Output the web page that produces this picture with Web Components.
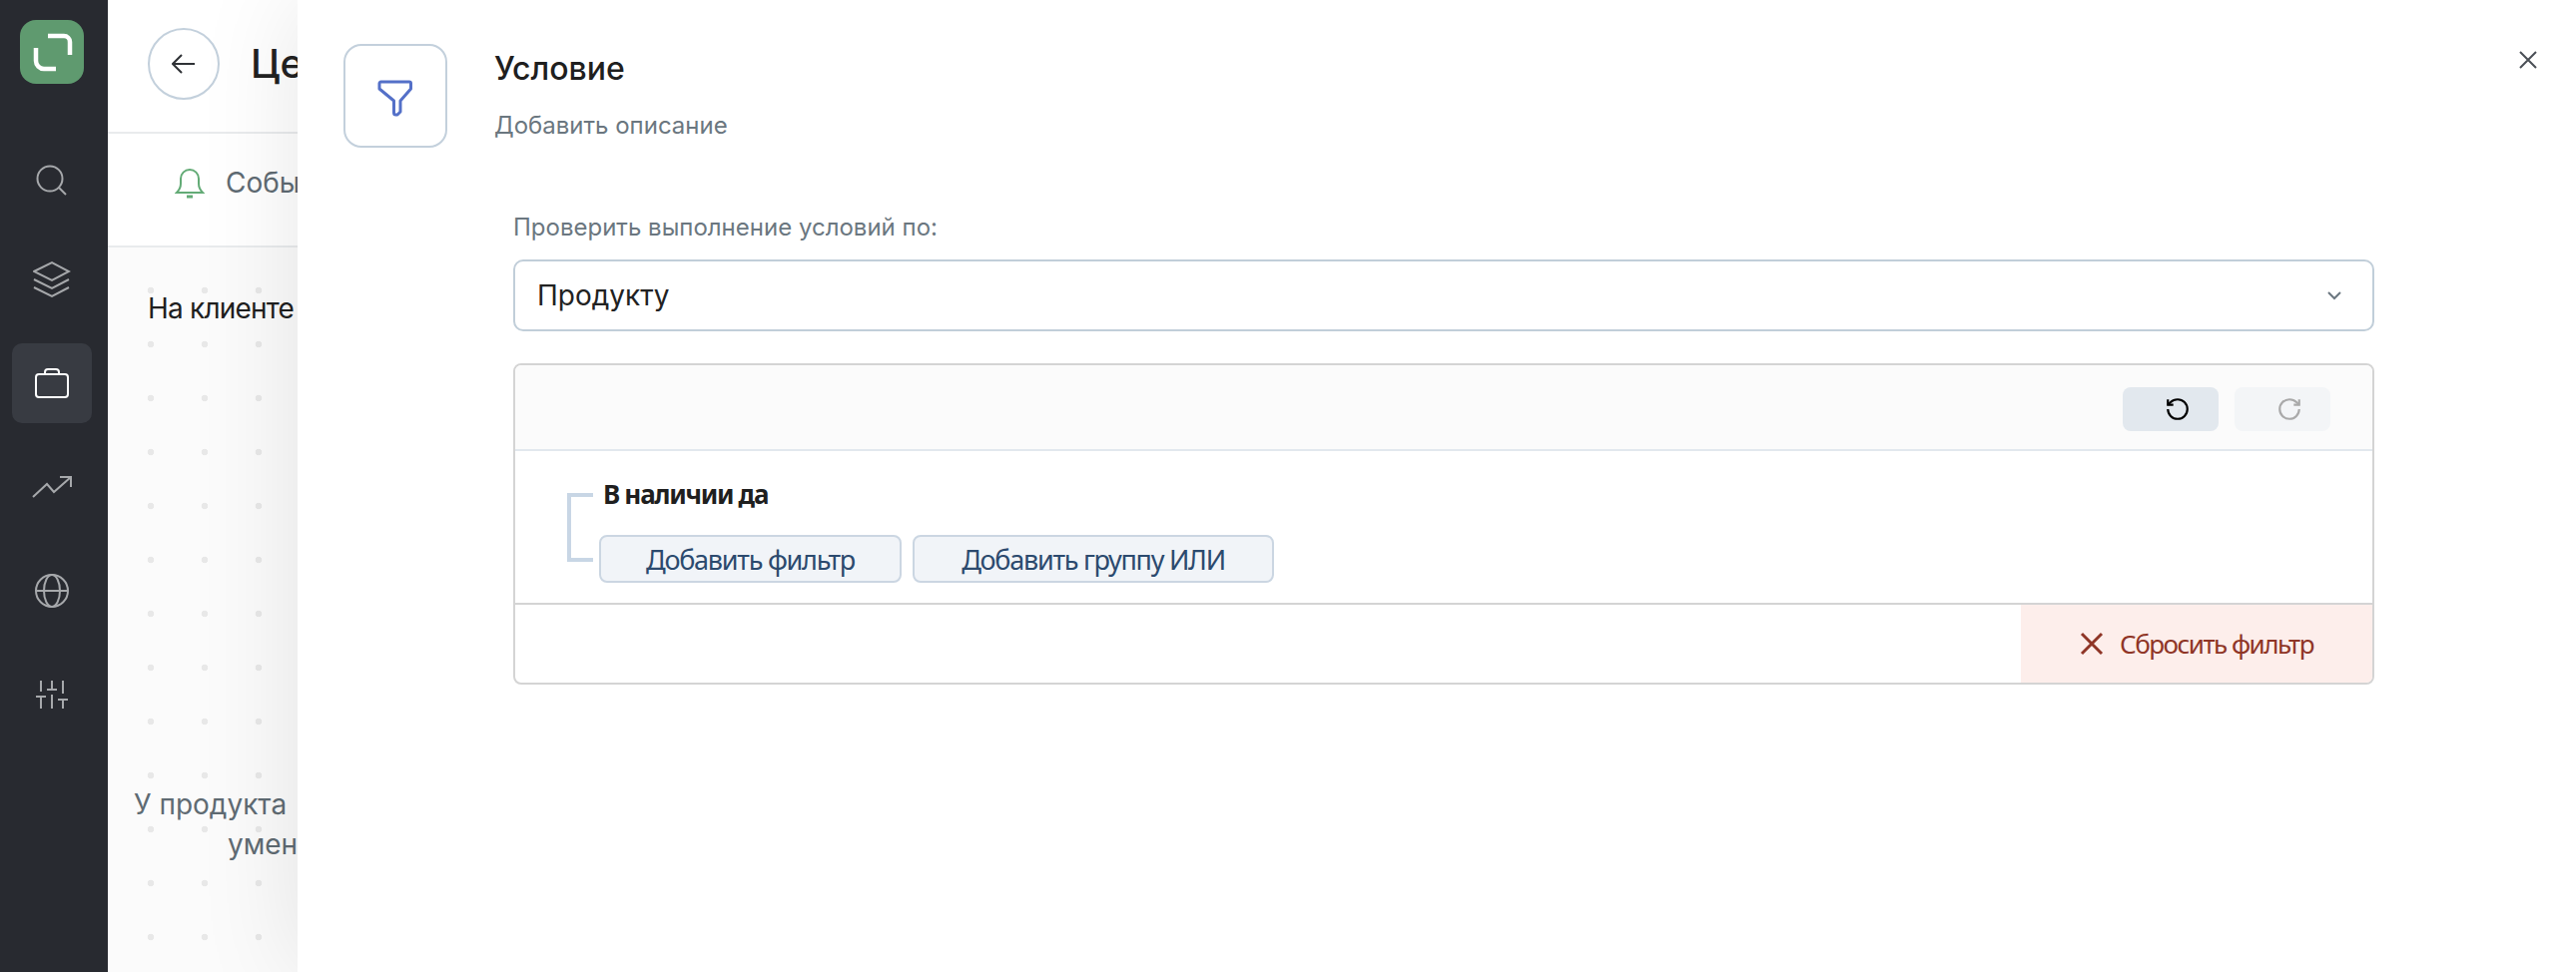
<!DOCTYPE html>
<html lang="ru">
<head>
<meta charset="utf-8">
<title>Условие</title>
<style>
html,body{margin:0;padding:0;height:100%;background:#fff;}
body{font-family:Inter,"Liberation Sans",sans-serif;}
</style>
</head>
<body>
<app-shell>
	<side-rail slot="rail"></side-rail>
	<page-view slot="page"></page-view>
	<condition-drawer slot="drawer"></condition-drawer>
</app-shell>

<script>
class AppShell extends HTMLElement {
	constructor() {
		super();
		this.attachShadow({ mode: 'open' });
		this.shadowRoot.innerHTML = `
		<style>
		:host{display:flex;width:2580px;height:974px;position:relative;overflow:hidden;}
		.page{flex:1;min-width:0;display:flex;}
		</style>
		<slot name="rail"></slot>
		<div class="page"><slot name="page"></slot></div>
		<slot name="drawer"></slot>
		`;
	}
}

class RailItem extends HTMLElement {
	constructor() {
		super();
		this.attachShadow({ mode: 'open' });
		this.shadowRoot.innerHTML = `
		<style>
		:host{display:flex;align-items:center;justify-content:center;width:80px;height:80px;border-radius:10px;color:#a6a8ab;}
		:host([active]){background:#383b42;color:#fff;}
		</style>
		<slot></slot>
		`;
	}
}

class SideRail extends HTMLElement {
	constructor() {
		super();
		this.attachShadow({ mode: 'open' });
		this.shadowRoot.innerHTML = `
		<style>
		:host{display:flex;flex-direction:column;align-items:center;flex:none;width:108px;height:100%;background:#282a30;box-sizing:border-box;padding:20px 4px 0 0;}
		.logo{width:64px;height:64px;margin:0 0 52px;border-radius:16px;background:#5f9a6f;}
		nav{display:flex;flex-direction:column;gap:24px;}
		svg{display:block;fill:none;stroke:currentColor;stroke-width:2;}
		.search{margin:11px 0 0 2px;}
		</style>
		<svg class="logo" viewBox="20 20 64 64" style="stroke:#fff;stroke-width:4.5">
			<path d="M48 36H64a6 6 0 0 1 6 6V55"/>
			<path d="M36 48V61a8 8 0 0 0 8 8H56"/>
		</svg>
		<nav>
			<rail-item><svg class="search" width="36" height="36" viewBox="0 0 36 36"><circle cx="15" cy="15" r="12.5"/><path d="M24 24l7 7"/></svg></rail-item>
			<rail-item><svg width="38" height="38" viewBox="0 0 38 38"><path d="M1 11 19 2l17 9-17 9z"/><path d="M1 19l18 9 17-9"/><path d="M1 27l18 9 17-9"/></svg></rail-item>
			<rail-item active><svg width="34" height="30" viewBox="0 0 34 30"><rect x="1" y="6" width="32" height="23" rx="3"/><path d="M10 6V4a3 3 0 0 1 3-3h8a3 3 0 0 1 3 3v2"/></svg></rail-item>
			<rail-item><svg width="40" height="24" viewBox="0 0 40 24"><path d="M1 22 15 9l7 8L39 2"/><path d="M28 2H39V12"/></svg></rail-item>
			<rail-item><svg width="36" height="36" viewBox="0 0 36 36"><circle cx="18" cy="18" r="16"/><ellipse cx="18" cy="18" rx="8" ry="16"/><path d="M2 18h32"/></svg></rail-item>
			<rail-item><svg width="34" height="30" viewBox="0 0 34 30"><path d="M6 1V12M6 18V29M1 17H11"/><path d="M17 1V10M17 15V29M12 10H22"/><path d="M28 1V14M28 21V29M23 20H33"/></svg></rail-item>
		</nav>
		`;
	}
}

class PageView extends HTMLElement {
	constructor() {
		super();
		this.attachShadow({ mode: 'open' });
		this.shadowRoot.innerHTML = `
		<style>
		:host{display:flex;flex-direction:column;flex:1;min-width:0;height:100%;white-space:nowrap;}
		header{display:flex;align-items:center;gap:31px;height:134px;box-sizing:border-box;flex:none;padding:0 0 4px 40px;border-bottom:2px solid #e9ebed;}
		.back{width:72px;height:72px;box-sizing:border-box;border:2px solid #c3d0dc;border-radius:50%;display:flex;align-items:center;justify-content:center;}
		h1{margin:0;font-size:40px;font-weight:500;color:#222;line-height:48px;}
		.tabs{display:flex;align-items:center;gap:21px;height:114px;box-sizing:border-box;flex:none;padding:0 0 14px 67px;border-bottom:2px solid #e9ebed;font-size:28px;color:#5f6b73;}
		.content{flex:1;background-color:#fbfbfb;background-image:radial-gradient(circle at 43px 43px,#e8e8e8 3px,transparent 3.6px);background-size:54px 54px;padding:44px 0 0 40px;}
		.status{font-size:28px;line-height:34px;color:#1f1f1f;letter-spacing:-.8px;}
		.empty{margin-top:460px;margin-left:-14px;font-size:28px;line-height:40px;color:#5f6b73;}
		.empty div + div{margin-left:94px;}
		svg{display:block;fill:none;}
		</style>
		<header>
			<div class="back"><svg width="24" height="20" viewBox="0 0 24 20" stroke="#2f3236" stroke-width="2"><path d="M23 10H2M10 1l-9 9 9 9"/></svg></div>
			<h1>Це</h1>
		</header>
		<div class="tabs">
			<svg width="30" height="32" viewBox="0 0 30 32" stroke="#63ab76" stroke-width="2"><path d="M2 26c3-3 4-5 4-9v-5a9 9 0 0 1 18 0v5c0 4 1 6 4 9z"/><path d="M12 30h6" stroke-width="3"/></svg>
			<span>Собы</span>
		</div>
		<div class="content">
			<div class="status">На клиенте</div>
			<div class="empty"><div>У продукта</div><div>умен</div></div>
		</div>
		`;
	}
}

class ConditionDrawer extends HTMLElement {
	constructor() {
		super();
		this.attachShadow({ mode: 'open' });
		this.shadowRoot.innerHTML = `
		<style>
		:host{display:block;position:absolute;left:298px;top:0;right:0;bottom:0;background:#fff;box-shadow:0 0 96px rgba(0,0,0,.1);box-sizing:border-box;padding-top:44px;}
		header{display:flex;padding:0 24px 0 46px;}
		.badge{width:104px;height:104px;box-sizing:border-box;border:2px solid #c3d0dc;border-radius:18px;display:flex;align-items:center;justify-content:center;flex:none;}
		.badge svg{margin-top:4px;}
		.titles{margin-left:47px;}
		h2{margin:1px 0 0;font-size:32px;font-weight:500;line-height:48px;color:#1f1f1f;}
		p{margin:16px 0 0;font-size:24px;line-height:34px;color:#6b7780;}
		.close{margin-left:auto;width:48px;height:32px;display:flex;align-items:center;justify-content:center;}
		.body{margin:63px 0 0 216px;width:1864px;}
		label{display:block;font-size:24px;line-height:34px;color:#6b7780;margin-bottom:15px;}
		.select{height:72px;box-sizing:border-box;border:2px solid #c1ced9;border-radius:10px;display:flex;align-items:center;justify-content:space-between;padding:0 30px 0 22px;font-size:28px;color:#222;margin-bottom:32px;}
		svg{display:block;fill:none;}
		</style>
		<header>
			<div class="badge"><svg width="38" height="38" viewBox="0 0 38 38" stroke="#5470c8" stroke-width="3" stroke-linejoin="round"><path d="M4.500 3H33a1.500 1.500 0 0 1 1.500 1.500V10L24 22V33l-3 3h-1.500a2 2 0 0 1-2-2V22L3 10V4.500A1.500 1.500 0 0 1 4.500 3z"/></svg></div>
			<div class="titles"><h2>Условие</h2><p>Добавить описание</p></div>
			<div class="close"><svg width="18" height="18" viewBox="0 0 18 18" stroke="#4a4f55" stroke-width="2"><path d="M1 1l16 16M17 1 1 17"/></svg></div>
		</header>
		<div class="body">
			<label>Проверить выполнение условий по:</label>
			<div class="select"><span>Продукту</span><svg width="16" height="10" viewBox="0 0 16 10" stroke="#6b7780" stroke-width="2"><path d="M2 2l6 6 6-6"/></svg></div>
			<condition-builder></condition-builder>
		</div>
		`;
	}
}

class ConditionBuilder extends HTMLElement {
	constructor() {
		super();
		this.attachShadow({ mode: 'open' });
		this.shadowRoot.innerHTML = `
		<style>
		:host{display:block;height:322px;box-sizing:border-box;border:2px solid #d4d4d4;border-radius:8px;overflow:hidden;font-family:"Noto Sans","Open Sans",sans-serif;font-stretch:87.5%;}
		.toolbar{height:84px;box-sizing:border-box;background:#fbfbfb;display:flex;justify-content:flex-end;gap:16px;padding:22px 42px 0 0;}
		.tool{width:96px;height:44px;border-radius:8px;background:#e2e8ee;display:flex;align-items:center;justify-content:center;padding-left:14px;box-sizing:border-box;color:#000;}
		.tool.off{background:#f3f5f7;color:#a9a9a9;}
		.rules{height:156px;box-sizing:border-box;border-top:2px solid #e2e8ee;border-bottom:2px solid #d4d4d4;display:flex;align-items:flex-start;padding-left:52px;}
		.bracket{width:26px;height:69px;box-sizing:border-box;margin-top:42px;border:solid #c8d6e5;border-width:4px 0 4px 4px;flex:none;}
		.group{margin-left:6px;padding-top:28px;}
		.name{padding-left:4px;font-size:26px;line-height:30px;font-weight:700;color:#1f1f1f;letter-spacing:-1.3px;}
		.actions{display:flex;gap:11px;margin-top:26px;}
		button{height:48px;box-sizing:border-box;border:2px solid #cbd6e2;border-radius:8px;background:#f1f4f8;color:#2c4a6e;font:inherit;font-size:27px;letter-spacing:-1.25px;padding:0;}
		.add-filter{width:303px;}
		.add-group{width:362px;}
		.footer{height:78px;display:flex;justify-content:flex-end;}
		.reset{width:352px;background:#fdeeeb;color:#8f3526;display:flex;align-items:center;justify-content:center;gap:16px;font-size:26px;letter-spacing:-1.5px;}
		svg{display:block;fill:none;stroke:currentColor;stroke-width:2;}
		</style>
		<div class="toolbar">
			<div class="tool"><svg width="26" height="26" viewBox="0 0 24 24"><path d="M3 12a9 9 0 1 0 9-9 9.750 9.750 0 0 0-6.740 2.740L3 8"/><path d="M3 3v5h5"/></svg></div>
			<div class="tool off"><svg width="26" height="26" viewBox="0 0 24 24"><path d="M21 12a9 9 0 1 1-9-9c2.520 0 4.930 1 6.740 2.740L21 8"/><path d="M21 3v5h-5"/></svg></div>
		</div>
		<div class="rules">
			<div class="bracket"></div>
			<div class="group">
				<div class="name">В наличии да</div>
				<div class="actions">
					<button class="add-filter">Добавить фильтр</button>
					<button class="add-group">Добавить группу ИЛИ</button>
				</div>
			</div>
		</div>
		<div class="footer">
			<div class="reset"><svg width="24" height="24" viewBox="0 0 24 24" style="stroke-width:3"><path d="M2 2l20 20M22 2 2 22"/></svg><span>Сбросить фильтр</span></div>
		</div>
		`;
	}
}

customElements.define('rail-item', RailItem);
customElements.define('side-rail', SideRail);
customElements.define('page-view', PageView);
customElements.define('condition-builder', ConditionBuilder);
customElements.define('condition-drawer', ConditionDrawer);
customElements.define('app-shell', AppShell);
</script>
</body>
</html>
